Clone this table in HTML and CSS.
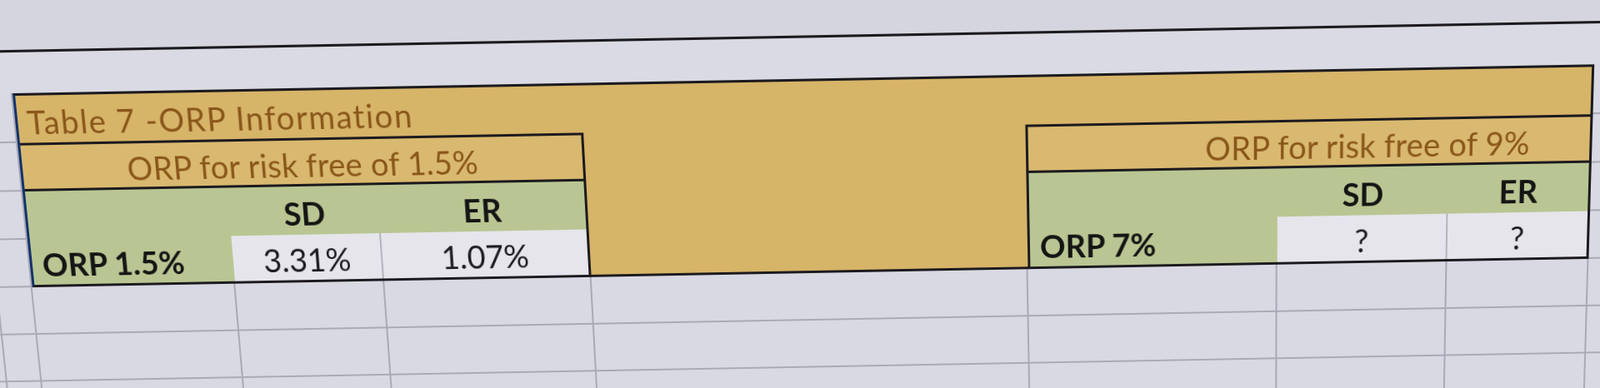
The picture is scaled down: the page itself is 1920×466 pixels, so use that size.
FILE: index.html
```html
<!DOCTYPE html>
<html lang="en">
<head>
<meta charset="utf-8">
<title>Table 7 - ORP Information</title>
<link rel="stylesheet" href="styles.css">
</head>
<body>
<div class="stage">
  <div class="sheet">
    <div class="band band-top"></div>
    <div class="band band-mid"></div>
    <div class="block">
      <div class="gold">
        <div class="title">Table 7 -ORP Information</div>
        <div class="tbl tbl-l">
          <div class="t-head">ORP for risk free of 1.5%</div>
          <div class="c g"></div>
          <div class="c g ctr hd">SD</div>
          <div class="c g ctr hd end">ER</div>
          <div class="c g lbl">ORP 1.5%</div>
          <div class="c w ctr val div">3.31%</div>
          <div class="c w ctr val end">1.07%</div>
        </div>
        <div class="tbl tbl-r">
          <div class="t-head">ORP for risk free of 9%</div>
          <div class="c g start"></div>
          <div class="c g ctr hd">SD</div>
          <div class="c g ctr hd">ER</div>
          <div class="c g lbl start">ORP 7%</div>
          <div class="c w ctr val div">?</div>
          <div class="c w ctr val">?</div>
        </div>
      </div>
      <div class="cell"></div><div class="cell"></div><div class="cell"></div>
      <div class="cell"></div><div class="cell"></div><div class="cell"></div>
      <div class="cell"></div><div class="cell"></div><div class="cell"></div>
      <div class="cell"></div><div class="cell"></div><div class="cell"></div>
    </div>
    <div class="row">
      <div class="cell"></div><div class="cell"></div><div class="cell"></div><div class="cell"></div><div class="cell"></div>
      <div class="cell"></div><div class="cell"></div><div class="cell"></div><div class="cell"></div><div class="cell"></div>
    </div>
    <div class="row">
      <div class="cell"></div><div class="cell"></div><div class="cell"></div><div class="cell"></div><div class="cell"></div>
      <div class="cell"></div><div class="cell"></div><div class="cell"></div><div class="cell"></div><div class="cell"></div>
    </div>
    <div class="row">
      <div class="cell"></div><div class="cell"></div><div class="cell"></div><div class="cell"></div><div class="cell"></div>
      <div class="cell"></div><div class="cell"></div><div class="cell"></div><div class="cell"></div><div class="cell"></div>
    </div>
    <div class="row">
      <div class="cell"></div><div class="cell"></div><div class="cell"></div><div class="cell"></div><div class="cell"></div>
      <div class="cell"></div><div class="cell"></div><div class="cell"></div><div class="cell"></div><div class="cell"></div>
    </div>
  </div>
</div>
</body>
</html>
```

FILE: styles.css
```css
html, body {
  margin: 0;
  padding: 0;
  background: #d9d9e3;
}

body {
  font-family: Lato, "Liberation Sans", sans-serif;
  font-size: 38px;
  line-height: 1;
}

.stage {
  width: 1920px;
  height: 466px;
  overflow: hidden;
  background: #d9d9e3;
  perspective: 1000px;
  perspective-origin: 1230px 240px;
}

.sheet {
  width: 2010px;
  margin: -60px 0 0 -40px;
  display: flex;
  flex-direction: column;
  transform-origin: 1270px 300px;
  transform: rotate(-1.05deg) rotateX(-4deg);
}

.band-top {
  height: 103px;
  box-sizing: border-box;
  border-bottom: 3px solid #1c1a1e;
  background: #d5d5df;
}

.band-mid {
  height: 48px;
  background: #dadae4;
}

.block {
  display: grid;
  grid-template-columns: 28px 42px 1879px 61px;
  grid-template-rows: 59px 58px 58px 58px;
}

.cell {
  box-sizing: border-box;
  border-right: 2px solid #a9a9b7;
  border-bottom: 2px solid #a9a9b7;
}

.row {
  display: grid;
  grid-template-columns: 28px 42px 245px 180px 250px 527px 301px 205px 171px 61px;
  height: 58px;
}

.gold {
  grid-column: 3;
  grid-row: 1 / 5;
  box-sizing: border-box;
  background: #d6b468;
  border: 3px solid #1c1a1e;
  border-left-color: #13336b;
  display: grid;
  grid-template-columns: 242px 180px 250px 527px 301px 205px 168px;
  grid-template-rows: 56px 58px 58px 55px;
}

.title {
  grid-column: 1 / -1;
  display: flex;
  align-items: flex-end;
  padding: 0 0 6px 11px;
  color: #8a561a;
  letter-spacing: 1.5px;
}

.tbl {
  grid-row: 2 / 5;
  display: grid;
  grid-template-rows: 58px 58px 55px;
}

.tbl-l {
  grid-column: 1 / 4;
  grid-template-columns: 242px 180px 250px;
}

.tbl-r {
  grid-column: 5 / 8;
  grid-template-columns: 301px 205px 168px;
}

.t-head {
  grid-column: 1 / -1;
  box-sizing: border-box;
  display: flex;
  align-items: flex-end;
  justify-content: center;
  padding-bottom: 4px;
  background: #d9b96f;
  color: #8a561a;
  letter-spacing: 0.2px;
  border-top: 3px solid #1c1a1e;
  border-bottom: 3px solid #1c1a1e;
}

.tbl-l .t-head {
  border-right: 3px solid #1c1a1e;
}

.tbl-r .t-head {
  border-left: 3px solid #1c1a1e;
  padding-left: 140px;
}

.c {
  box-sizing: border-box;
  display: flex;
  align-items: flex-end;
  color: #151515;
  padding-bottom: 7px;
}

.tbl .c:nth-child(n+5) {
  padding-bottom: 6px;
}

.g {
  background: #b9c693;
}

.w {
  background: #e5e5eb;
}

.ctr {
  justify-content: center;
}

.hd {
  font-weight: 700;
}

.lbl {
  padding-left: 12px;
  font-weight: 700;
}

.val {
  color: #1c1c20;
}

.end {
  border-right: 3px solid #1c1a1e;
}

.start {
  border-left: 3px solid #1c1a1e;
}

.div {
  border-right: 2px solid #b4b4be;
}
```
